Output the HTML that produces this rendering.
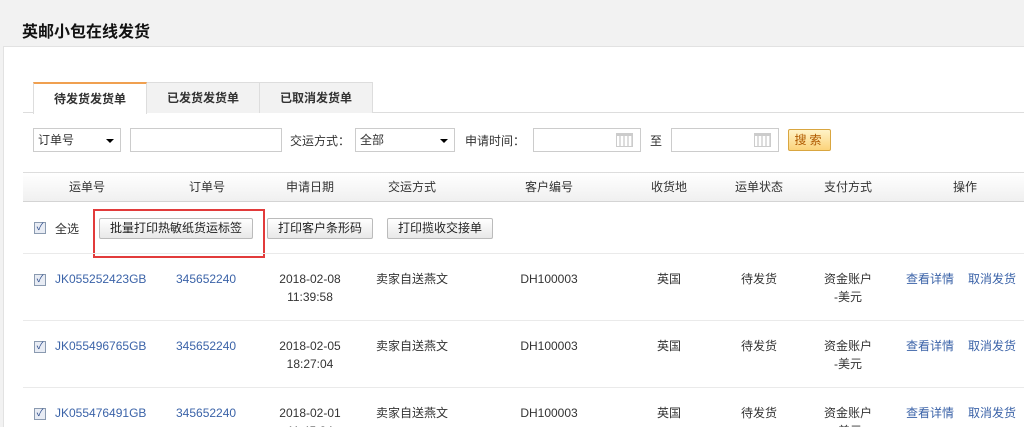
<!DOCTYPE html>
<html><head><meta charset="utf-8"><style>
*{margin:0;padding:0;box-sizing:border-box}
html,body{width:1024px;height:427px;overflow:hidden}
body{background:#f2f2f2;font-family:"Liberation Sans","Noto Sans CJK SC",sans-serif;font-size:12px;color:#333;position:relative}
.a{position:absolute;white-space:nowrap}
.panel{position:absolute;left:3px;top:46px;width:1021px;height:381px;background:#fff;border-top:1px solid #e2e2e2;border-left:1px solid #e2e2e2}
.tab{position:absolute;top:82px;height:31px;line-height:30px;text-align:center;background:#f2f2f2;border:1px solid #ddd;border-bottom:none;font-weight:bold;color:#333}
.sel{position:absolute;height:24px;border:1px solid #ccc;background:#fff;line-height:22px;padding-left:4px}
.sel:after{content:"";position:absolute;right:6px;top:10px;border:4px solid transparent;border-top:4px solid #000;border-bottom:0}
.inp{position:absolute;height:24px;border:1px solid #ccc;background:#fff}
.cal{position:absolute;right:7px;top:4px;width:17px;height:14px;border:1px solid #ccc;border-top:3px solid #ccc;background:repeating-linear-gradient(90deg,#fff 0 2px,#ddd 2px 4px)}
.btn{position:absolute;top:218px;height:21px;line-height:19px;border:1px solid #bbb;border-radius:2px;background:linear-gradient(#fff,#e8e8e8);padding:0 10px;color:#222}
.cb{position:absolute;width:12px;height:12px;border:1px solid #8a9ab0;background:#e8ecf4;font-size:10px;line-height:10px;text-align:center;color:#2a4a8a}
.lk{color:#3b63a8}
.c{position:absolute;text-align:center;white-space:nowrap;line-height:18px}
.sep{position:absolute;left:23px;width:1001px;height:1px;background:#eaeaea}
</style></head><body>
<div class="a" style="left:22px;top:18px;font-size:16px;font-weight:bold;color:#111">英邮小包在线发货</div>
<div class="panel"></div>
<div class="a" style="left:23px;top:112px;width:1001px;height:1px;background:#ddd"></div>
<div class="tab" style="left:33px;width:114px;background:#fff;border-top:2px solid #f0a050;height:32px">待发货发货单</div>
<div class="tab" style="left:147px;width:113px;border-left:none">已发货发货单</div>
<div class="tab" style="left:260px;width:113px;border-left:none">已取消发货单</div>

<div class="sel" style="left:33px;top:128px;width:88px">订单号</div>
<div class="inp" style="left:130px;top:128px;width:152px"></div>
<div class="a" style="left:290px;top:132px">交运方式：</div>
<div class="sel" style="left:355px;top:128px;width:100px">全部</div>
<div class="a" style="left:465px;top:132px">申请时间：</div>
<div class="inp" style="left:533px;top:128px;width:108px"><div class="cal"></div></div>
<div class="a" style="left:650px;top:132px">至</div>
<div class="inp" style="left:671px;top:128px;width:108px"><div class="cal"></div></div>
<div class="a" style="left:788px;top:129px;width:43px;height:22px;border:1px solid #d9a640;border-radius:2px;background:linear-gradient(#fff3c8,#fbd37a);color:#b05a00;text-align:center;line-height:20px;letter-spacing:3px">搜索</div>

<div class="a" style="left:23px;top:172px;width:1001px;height:30px;border-top:1px solid #ddd;border-bottom:1px solid #d4d4d4;background:linear-gradient(#fff,#f0f0f0)"></div>
<div class="c" style="left:47px;width:80px;top:178px">运单号</div>
<div class="c" style="left:167px;width:80px;top:178px">订单号</div>
<div class="c" style="left:270px;width:80px;top:178px">申请日期</div>
<div class="c" style="left:372px;width:80px;top:178px">交运方式</div>
<div class="c" style="left:509px;width:80px;top:178px">客户编号</div>
<div class="c" style="left:629px;width:80px;top:178px">收货地</div>
<div class="c" style="left:719px;width:80px;top:178px">运单状态</div>
<div class="c" style="left:808px;width:80px;top:178px">支付方式</div>
<div class="c" style="left:925px;width:80px;top:178px">操作</div>

<div class="cb" style="left:34px;top:222px">✓</div>
<div class="a" style="left:55px;top:220px">全选</div>
<div class="btn" style="left:99px">批量打印热敏纸货运标签</div>
<div class="btn" style="left:267px">打印客户条形码</div>
<div class="btn" style="left:387px">打印揽收交接单</div>
<div class="a" style="left:93px;top:209px;width:172px;height:49px;border:2px solid #e23b3b"></div>

<div class="sep" style="top:253px"></div>
<div class="sep" style="top:320px"></div>
<div class="sep" style="top:387px"></div>

<div class="cb" style="left:34px;top:274px">✓</div>
<div class="c lk" style="left:55px;top:270px">JK055252423GB</div>
<div class="c lk" style="left:176px;top:270px">345652240</div>
<div class="c" style="left:270px;width:80px;top:270px">2018-02-08<br>11:39:58</div>
<div class="c" style="left:376px;top:270px">卖家自送燕文</div>
<div class="c" style="left:509px;width:80px;top:270px">DH100003</div>
<div class="c" style="left:629px;width:80px;top:270px">英国</div>
<div class="c" style="left:719px;width:80px;top:270px">待发货</div>
<div class="c" style="left:808px;width:80px;top:270px">资金账户<br>-美元</div>
<div class="c lk" style="left:906px;top:270px">查看详情</div>
<div class="c lk" style="left:968px;top:270px">取消发货</div>

<div class="cb" style="left:34px;top:341px">✓</div>
<div class="c lk" style="left:55px;top:337px">JK055496765GB</div>
<div class="c lk" style="left:176px;top:337px">345652240</div>
<div class="c" style="left:270px;width:80px;top:337px">2018-02-05<br>18:27:04</div>
<div class="c" style="left:376px;top:337px">卖家自送燕文</div>
<div class="c" style="left:509px;width:80px;top:337px">DH100003</div>
<div class="c" style="left:629px;width:80px;top:337px">英国</div>
<div class="c" style="left:719px;width:80px;top:337px">待发货</div>
<div class="c" style="left:808px;width:80px;top:337px">资金账户<br>-美元</div>
<div class="c lk" style="left:906px;top:337px">查看详情</div>
<div class="c lk" style="left:968px;top:337px">取消发货</div>

<div class="cb" style="left:34px;top:408px">✓</div>
<div class="c lk" style="left:55px;top:404px">JK055476491GB</div>
<div class="c lk" style="left:176px;top:404px">345652240</div>
<div class="c" style="left:270px;width:80px;top:404px">2018-02-01<br>11:45:24</div>
<div class="c" style="left:376px;top:404px">卖家自送燕文</div>
<div class="c" style="left:509px;width:80px;top:404px">DH100003</div>
<div class="c" style="left:629px;width:80px;top:404px">英国</div>
<div class="c" style="left:719px;width:80px;top:404px">待发货</div>
<div class="c" style="left:808px;width:80px;top:404px">资金账户<br>-美元</div>
<div class="c lk" style="left:906px;top:404px">查看详情</div>
<div class="c lk" style="left:968px;top:404px">取消发货</div>
</body></html>
